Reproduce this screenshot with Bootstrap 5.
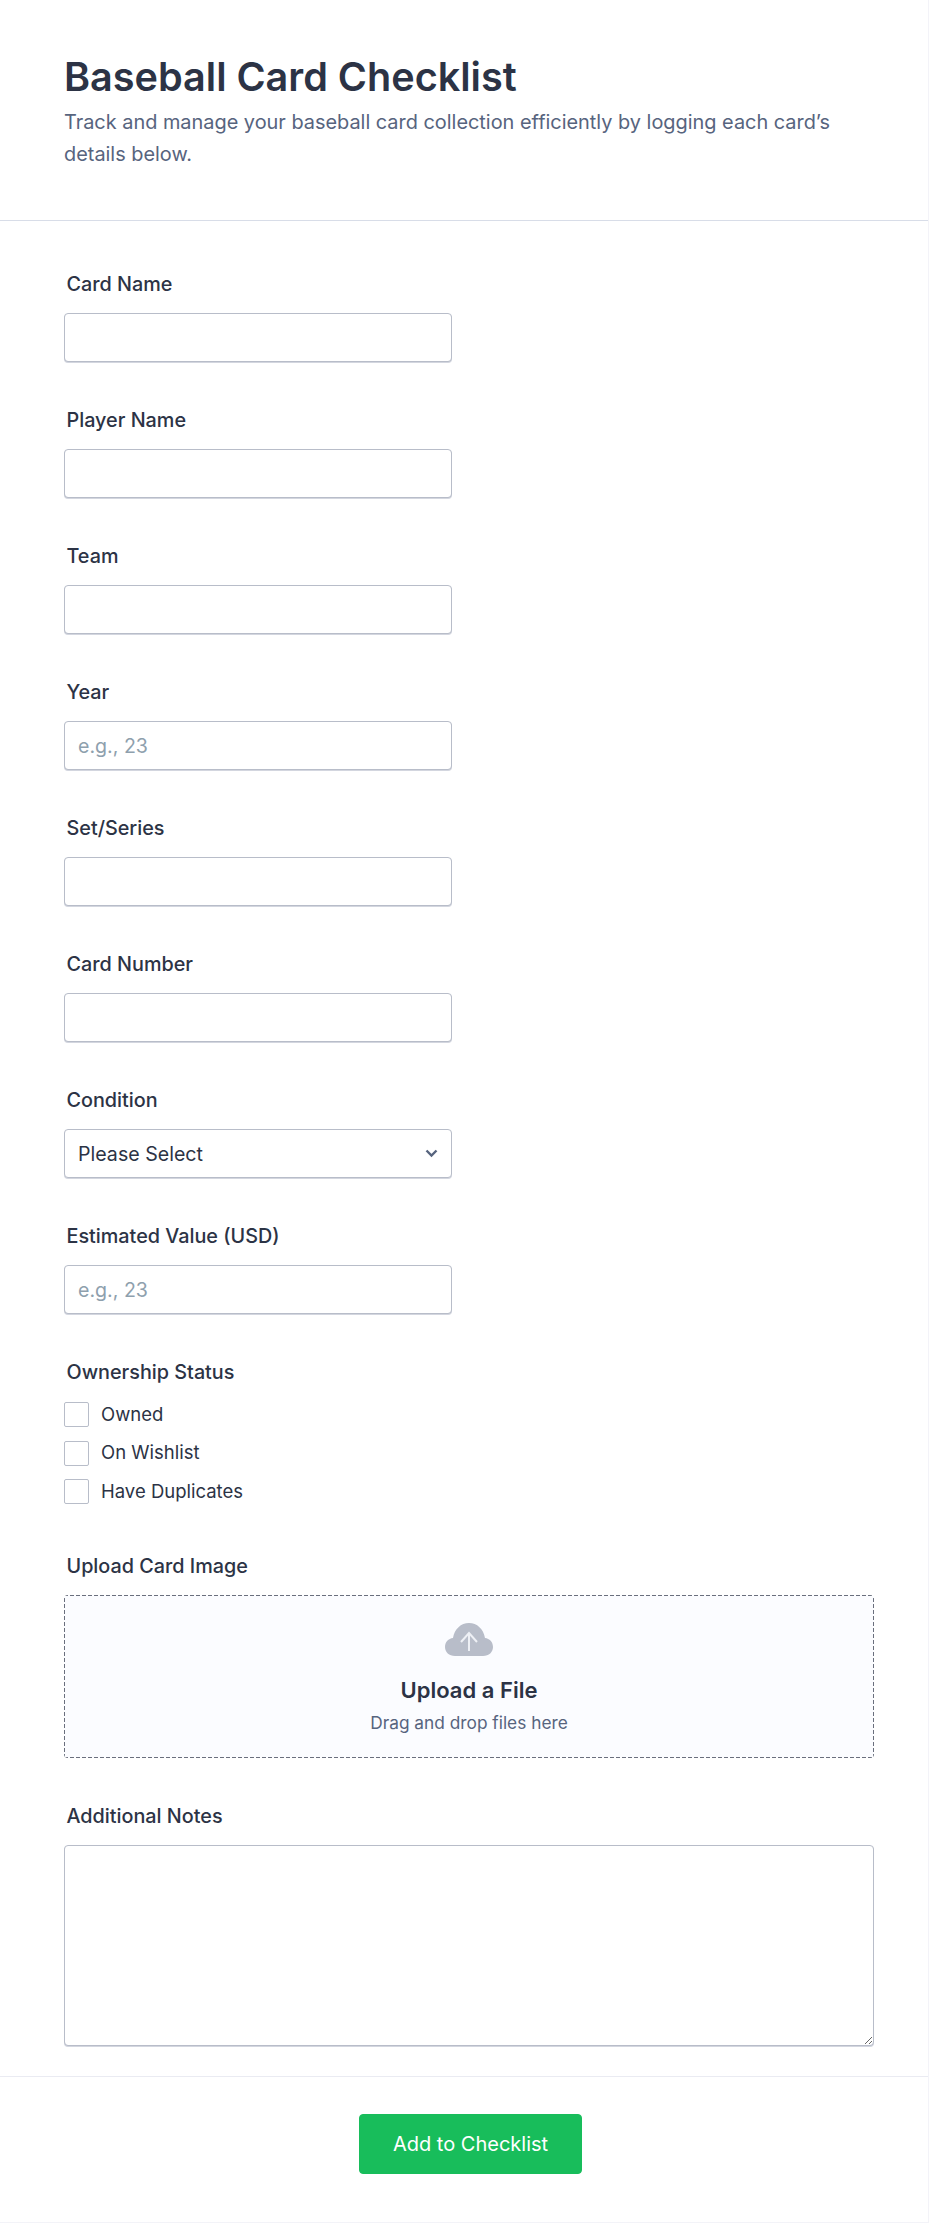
<!DOCTYPE html>
<html lang="en">
<head>
<meta charset="utf-8">
<title>Baseball Card Checklist</title>
<link rel="stylesheet" href="https://cdn.jsdelivr.net/npm/bootstrap@5.3.0/dist/css/bootstrap.min.css">
<style>
html, body { background: #fff; }
body { font-family: Inter, "Liberation Sans", sans-serif; color: #2c3345; height: 2224px; overflow: hidden; }
.sheet { width: 929px; height: 2223px; border-right: 1px solid #f3f3f8; border-bottom: 1px solid #f3f3f8; }
.head-zone { height: 221px; padding: 54px 64px 0; border-bottom: 1px solid #d8dde8; }
.head-title { font-size: 39.6px; font-weight: 600; line-height: 46px; margin: 0 0 6px; color: #2c3345; }
.head-sub { font-size: 19.9px; line-height: 32px; color: #57647e; margin: 0; }
.form-zone { padding: 48px 54px 0 64px; height: 1856px; border-bottom: 1px solid #eaebf2; }
.field-block { margin-bottom: 40px; height: 96px; }
.field-label { display: block; font-size: 19.8px; font-weight: 500; line-height: 28px; padding-top: 1px; height: 29px; color: #2c3345; margin: 0 0 15px 2.500px; }
.field-short { width: 388px; }
.form-control.field-input, .form-select.field-input { height: 49px; border: 1px solid #b8bdc9; border-radius: 4px; font-size: 19.6px; padding: 0 13px; color: #2c3345; box-shadow: 0 1px 0 #d3d6df; }
.field-input::placeholder { color: #8ea0ad; opacity: 1; }
.form-select.field-input { padding-top: 2px; background-image: url("data:image/svg+xml,%3csvg xmlns='http://www.w3.org/2000/svg' viewBox='0 0 13 9'%3e%3cpath fill='none' stroke='%2357647e' stroke-width='2.4' d='M1.500 1.500l5 5 5-5'/%3e%3c/svg%3e"); background-size: 13px 9px; background-position: right 13px center; }
.status-block { margin-bottom: 40px; }
.status-block .field-label { margin-bottom: 9.500px; }
.tick-row { display: flex; align-items: center; gap: 12px; height: 38.5px; font-size: 18.500px; color: #2c3345; margin: 0; }
.tick-box.form-check-input { width: 25px; height: 25px; margin: 0; border: 1px solid #b8bdc9; border-radius: 2px; flex: none; }
.upload-block { margin-bottom: 42.500px; }
.upload-zone { height: 163px; border-radius: 4px;
  background-color: #fbfcff;
  background-image:
    repeating-linear-gradient(90deg, #6a6f7d 0 4px, transparent 4px 6px),
    repeating-linear-gradient(90deg, #6a6f7d 0 4px, transparent 4px 6px),
    repeating-linear-gradient(0deg, #6a6f7d 0 4px, transparent 4px 6px),
    repeating-linear-gradient(0deg, #6a6f7d 0 4px, transparent 4px 6px);
  background-size: 100% 1px, 100% 1px, 1px 100%, 1px 100%;
  background-position: 0 0, 0 100%, 0 0, 100% 0;
  background-repeat: no-repeat; }
.upload-icon { width: 48px; height: 34px; margin-top: 28px; }
.upload-title { font-size: 22px; font-weight: 600; line-height: 28px; margin-top: 19px; color: #2c3345; }
.upload-hint { font-size: 17.300px; line-height: 24px; color: #57647e; margin-top: 7px; }
.notes-area.form-control { height: 201px; border: 1px solid #b8bdc9; border-radius: 4px; box-shadow: 0 1px 0 #d3d6df; }
.action-zone { padding-top: 37px; padding-left: 13px; }
.send-btn.btn { width: 223px; height: 60px; background: #18bd5b; border: 1px solid #18bd5b; border-radius: 4px; color: #fff; font-size: 20px; font-weight: 400; padding: 0; }
</style>
</head>
<body>
<div class="sheet">
  <header class="head-zone">
    <h1 class="head-title">Baseball Card Checklist</h1>
    <p class="head-sub">Track and manage your baseball card collection efficiently by logging each card’s details below.</p>
  </header>
  <form class="form-zone">
    <div class="field-block field-short"><label class="field-label" for="f1">Card Name</label><input id="f1" class="form-control field-input" type="text"></div>
    <div class="field-block field-short"><label class="field-label" for="f2">Player Name</label><input id="f2" class="form-control field-input" type="text"></div>
    <div class="field-block field-short"><label class="field-label" for="f3">Team</label><input id="f3" class="form-control field-input" type="text"></div>
    <div class="field-block field-short"><label class="field-label" for="f4">Year</label><input id="f4" class="form-control field-input" type="text" placeholder="e.g., 23"></div>
    <div class="field-block field-short"><label class="field-label" for="f5">Set/Series</label><input id="f5" class="form-control field-input" type="text"></div>
    <div class="field-block field-short"><label class="field-label" for="f6">Card Number</label><input id="f6" class="form-control field-input" type="text"></div>
    <div class="field-block field-short"><label class="field-label" for="f7">Condition</label><select id="f7" class="form-select field-input"><option>Please Select</option></select></div>
    <div class="field-block field-short"><label class="field-label" for="f8">Estimated Value (USD)</label><input id="f8" class="form-control field-input" type="text" placeholder="e.g., 23"></div>
    <div class="status-block">
      <div class="field-label">Ownership Status</div>
      <label class="tick-row"><input class="form-check-input tick-box" type="checkbox"><span>Owned</span></label>
      <label class="tick-row"><input class="form-check-input tick-box" type="checkbox"><span>On Wishlist</span></label>
      <label class="tick-row"><input class="form-check-input tick-box" type="checkbox"><span>Have Duplicates</span></label>
    </div>
    <div class="upload-block">
      <div class="field-label">Upload Card Image</div>
      <div class="upload-zone d-flex flex-column align-items-center">
        <svg class="upload-icon" viewBox="0 0 48 34" aria-hidden="true">
          <path fill="#b8bdc9" d="M10 33C4 33 0 29 0 24s3.500-8.500 8-9C9.500 6 16 0 24 0s14.500 6 16 15c4.500.5 8 4 8 9s-4 9-10 9z"/>
          <path fill="none" stroke="#eef0f5" stroke-width="2" d="M24 28V10M16 19l8-9 8 9"/>
        </svg>
        <div class="upload-title">Upload a File</div>
        <div class="upload-hint">Drag and drop files here</div>
      </div>
    </div>
    <div>
      <label class="field-label" for="f9">Additional Notes</label>
      <textarea id="f9" class="form-control notes-area"></textarea>
    </div>
  </form>
  <div class="action-zone d-flex justify-content-center">
    <button type="button" class="btn send-btn">Add to Checklist</button>
  </div>
</div>
</body>
</html>
